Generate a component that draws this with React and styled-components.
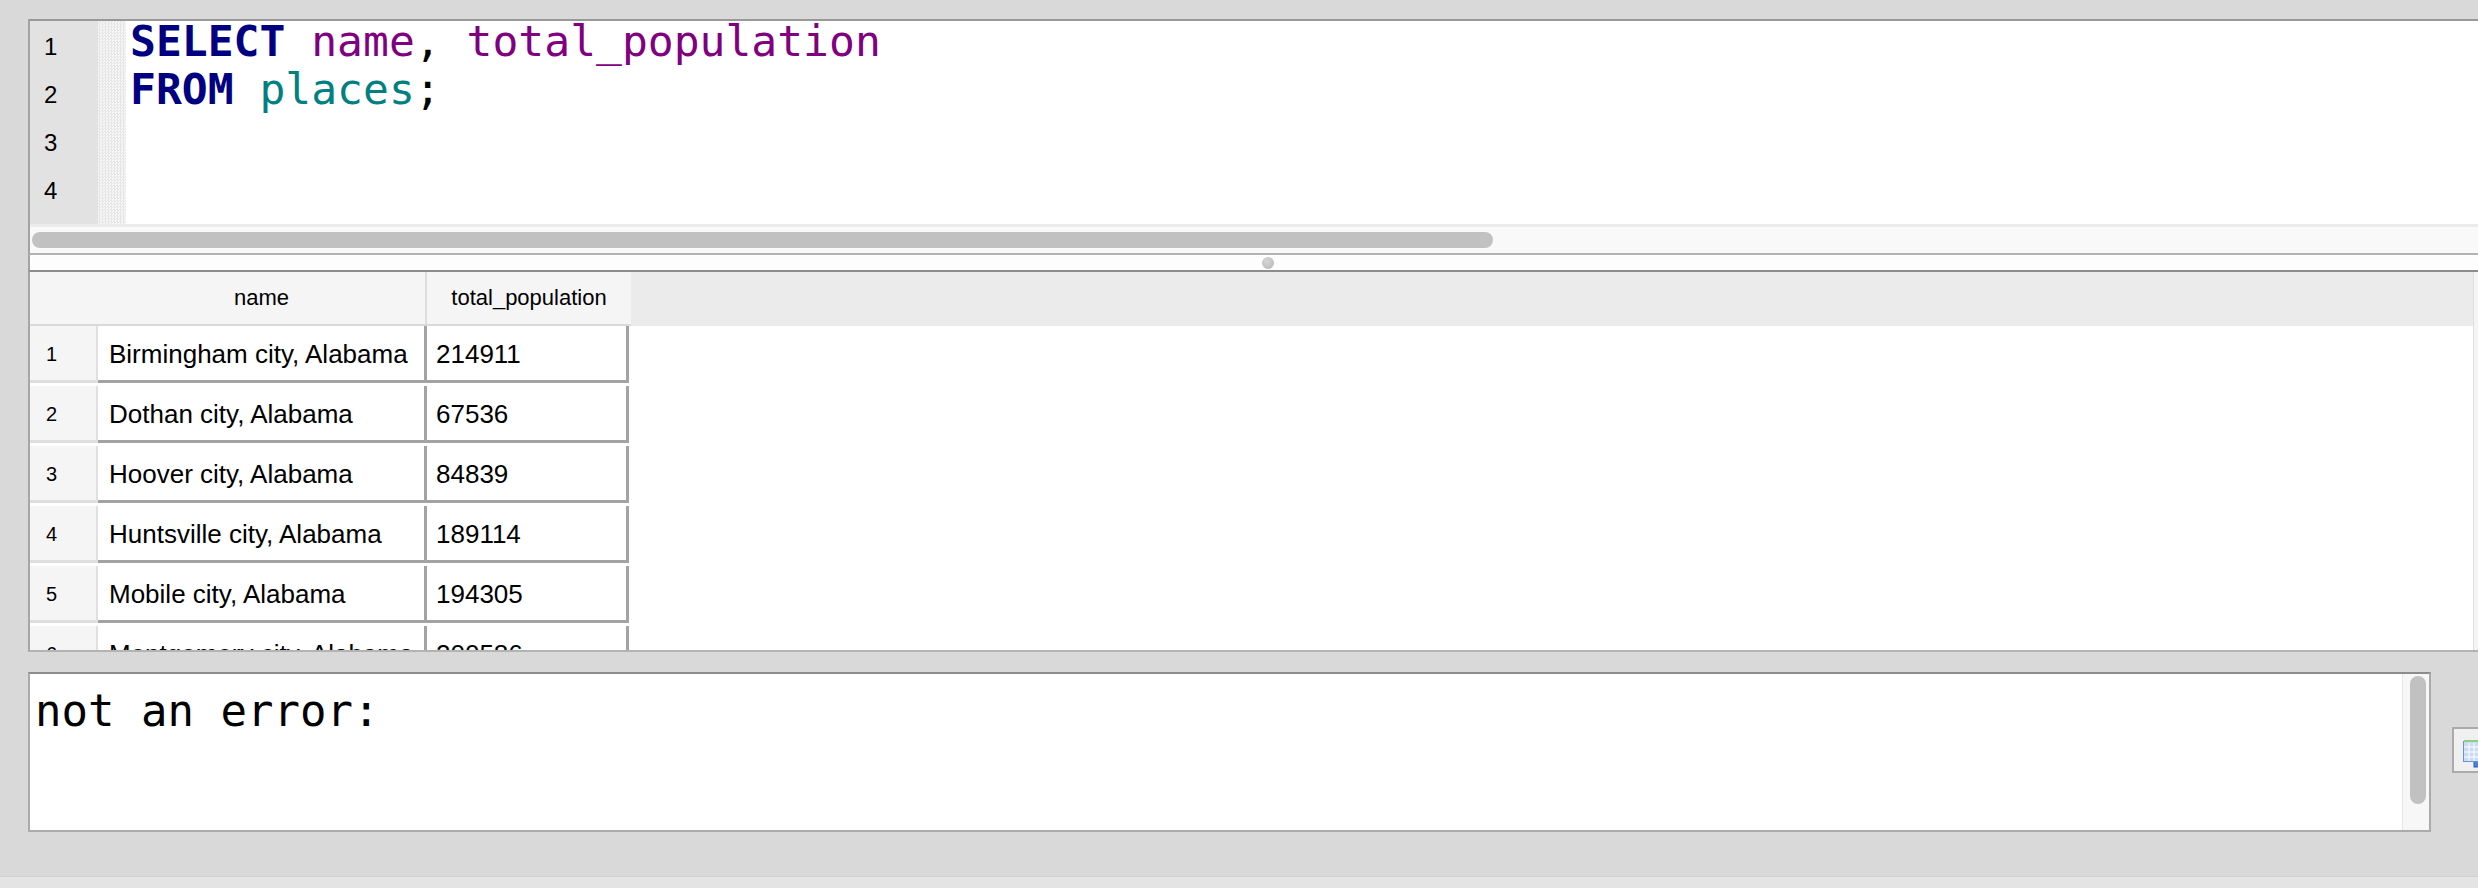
import styled, { createGlobalStyle } from "styled-components";

const GlobalStyle = createGlobalStyle`
html, body {
    margin:0;
    padding:0;
    background:#d9d9d9;
    overflow:hidden;
}
`;

const Page = styled.div`
display:flex;
flex-direction:column;
width:2478px;
height:888px;
padding-top:19px;
box-sizing:border-box;
overflow:hidden;
font-family:"Liberation Sans", Arial, sans-serif;
`;

const Column = styled.div`
display:flex;
flex-direction:column;
padding-left:28px;
`;

const EditorPanel = styled.div`
display:flex;
flex-direction:column;
background:#fff;
border-top:2px solid #999;
border-left:2px solid #a3a3a3;
border-bottom:2px solid #b3b3b3;
`;

const LinesArea = styled.div`
display:flex;
height:203px;
`;

const Gutter = styled.div`
width:68px;
background:#e2e2e2;
padding-top:2px;
box-sizing:border-box;
`;

const LineNumber = styled.div`
height:48px;
line-height:48px;
padding-left:14px;
font-size:24px;
color:#000;
`;

const FoldBand = styled.div`
width:28px;
background-color:#f7f7f7;
background-image:repeating-conic-gradient(#e6e6e6 0% 25%, #f7f7f7 0% 50%);
background-size:3px 3px;
`;

const Code = styled.div`
flex:1;
padding-left:4px;
font-family:"DejaVu Sans Mono", "Liberation Mono", monospace;
font-size:43px;
`;

const CodeLine = styled.div`
height:48px;
line-height:40px;
white-space:pre;
color:#000;
`;

const Tok = styled.span`
color:${(p) => p.color};
font-weight:${(p) => (p.bold ? "bold" : "normal")};
`;

const HScroll = styled.div`
height:21px;
padding:5px 0 0 2px;
background:#f9f9f9;
border-top:3px solid #ececec;
`;

const HThumb = styled.div`
width:1461px;
height:16px;
border-radius:8px;
background:#c1c1c1;
`;

const Splitter = styled.div`
height:15px;
display:flex;
align-items:center;
padding-left:1232px;
background:#fdfdfd;
border-left:2px solid #a3a3a3;
`;

const SplitDot = styled.div`
width:12px;
height:12px;
border-radius:50%;
background:radial-gradient(circle at 40% 35%, #d6d6d6, #b4b4b4);
`;

const TablePanel = styled.div`
display:flex;
height:378px;
background:#fff;
border-top:2px solid #8c8c8c;
border-left:2px solid #a6a6a6;
border-bottom:2px solid #b3b3b3;
`;

const Grid = styled.div`
flex:1;
display:flex;
flex-direction:column;
overflow:hidden;
`;

const HeaderBar = styled.div`
display:flex;
height:54px;
flex-shrink:0;
background:#ebebeb;
`;

const HeadCell = styled.div`
width:${(p) => p.w}px;
flex-shrink:0;
height:52px;
line-height:52px;
text-align:center;
font-size:22px;
color:#000;
background:#f5f5f5;
border-bottom:2px solid #d9d9d9;
border-right:${(p) => (p.divider ? "2px solid #dcdcdc" : "none")};
`;

const DataRow = styled.div`
display:flex;
flex-shrink:0;
height:60px;
`;

const RowNum = styled.div`
width:68px;
flex-shrink:0;
height:57px;
line-height:57px;
padding-left:16px;
box-sizing:border-box;
font-size:20px;
color:#000;
background:#f5f5f5;
border-right:2px solid #e0e0e0;
border-bottom:3px solid #dedede;
`;

const Cell = styled.div`
width:${(p) => p.w}px;
flex-shrink:0;
height:57px;
line-height:57px;
padding-left:${(p) => p.pad}px;
box-sizing:border-box;
font-size:26px;
color:#000;
white-space:nowrap;
overflow:hidden;
border-right:3px solid #a3a3a3;
border-bottom:3px solid #a3a3a3;
`;

const VTrack = styled.div`
width:4px;
background:#f4f4f4;
border-left:1px solid #e0e0e0;
`;

const BottomRow = styled.div`
display:flex;
align-items:flex-start;
margin-top:20px;
padding-left:28px;
`;

const ErrorBox = styled.div`
display:flex;
flex-shrink:0;
width:2399px;
height:156px;
background:#fff;
border:2px solid #ababab;
border-top-color:#8c8c8c;
`;

const ErrorText = styled.div`
flex:1;
padding:12px 0 0 5px;
font-family:"DejaVu Sans Mono", "Liberation Mono", monospace;
font-size:44px;
line-height:50px;
color:#000;
white-space:pre;
`;

const VScroll = styled.div`
width:27px;
padding:2px 0 0 7px;
box-sizing:border-box;
background:#f7f7f7;
border-left:1px solid #e6e6e6;
`;

const VThumb = styled.div`
width:16px;
height:128px;
border-radius:8px;
background:#c1c1c1;
`;

const IconButton = styled.div`
margin:55px 0 0 21px;
width:40px;
height:46px;
flex-shrink:0;
padding:8px 0 0 8px;
box-sizing:border-box;
background:#f0f0f0;
border:2px solid #ababab;
`;

const Footer = styled.div`
margin-top:auto;
height:11px;
background:#e4e4e4;
border-top:1px solid #d2d2d2;
`;

const rows = [
    ["Birmingham city, Alabama", "214911"],
    ["Dothan city, Alabama", "67536"],
    ["Hoover city, Alabama", "84839"],
    ["Huntsville city, Alabama", "189114"],
    ["Mobile city, Alabama", "194305"],
    ["Montgomery city, Alabama", "200586"],
];

const TableIcon = () => (
    <svg width="32" height="32" viewBox="0 0 32 32">
        <rect x="12" y="12" width="18" height="18" fill="#4f7fd8" stroke="#2f5fb8" strokeWidth="1" />
        <rect x="1.5" y="4.5" width="22" height="20" fill="#c9dbf5" stroke="#6b93da" strokeWidth="1" />
        <rect x="2" y="3" width="22" height="2" fill="#8cd17e" />
        <g stroke="#fff" strokeWidth="1">
            <line x1="2" y1="10" x2="23" y2="10" />
            <line x1="2" y1="15" x2="23" y2="15" />
            <line x1="2" y1="20" x2="23" y2="20" />
            <line x1="7" y1="6" x2="7" y2="24" />
            <line x1="12" y1="6" x2="12" y2="24" />
        </g>
    </svg>
);

const App = () => {
    return (
        <>
            <GlobalStyle />
            <Page>
                <Column>
                    <EditorPanel>
                        <LinesArea>
                            <Gutter>
                                {[1, 2, 3, 4].map((n) => (
                                    <LineNumber key={n}>{n}</LineNumber>
                                ))}
                            </Gutter>
                            <FoldBand />
                            <Code>
                                <CodeLine>
                                    <Tok color="#000080" bold>SELECT</Tok>{" "}
                                    <Tok color="#800080">name</Tok>,{" "}
                                    <Tok color="#800080">total_population</Tok>
                                </CodeLine>
                                <CodeLine>
                                    <Tok color="#000080" bold>FROM</Tok>{" "}
                                    <Tok color="#008080">places</Tok>;
                                </CodeLine>
                                <CodeLine />
                                <CodeLine />
                            </Code>
                        </LinesArea>
                        <HScroll>
                            <HThumb />
                        </HScroll>
                    </EditorPanel>
                    <Splitter>
                        <SplitDot />
                    </Splitter>
                    <TablePanel>
                        <Grid>
                            <HeaderBar>
                                <HeadCell w={68} />
                                <HeadCell w={327} divider>name</HeadCell>
                                <HeadCell w={204}>total_population</HeadCell>
                            </HeaderBar>
                            {rows.map(([name, pop], i) => (
                                <DataRow key={name}>
                                    <RowNum>{i + 1}</RowNum>
                                    <Cell w={329} pad={11}>{name}</Cell>
                                    <Cell w={202} pad={9}>{pop}</Cell>
                                </DataRow>
                            ))}
                        </Grid>
                        <VTrack />
                    </TablePanel>
                </Column>
                <BottomRow>
                    <ErrorBox>
                        <ErrorText>not an error:</ErrorText>
                        <VScroll>
                            <VThumb />
                        </VScroll>
                    </ErrorBox>
                    <IconButton>
                        <TableIcon />
                    </IconButton>
                </BottomRow>
                <Footer />
            </Page>
        </>
    );
};

export default App;
